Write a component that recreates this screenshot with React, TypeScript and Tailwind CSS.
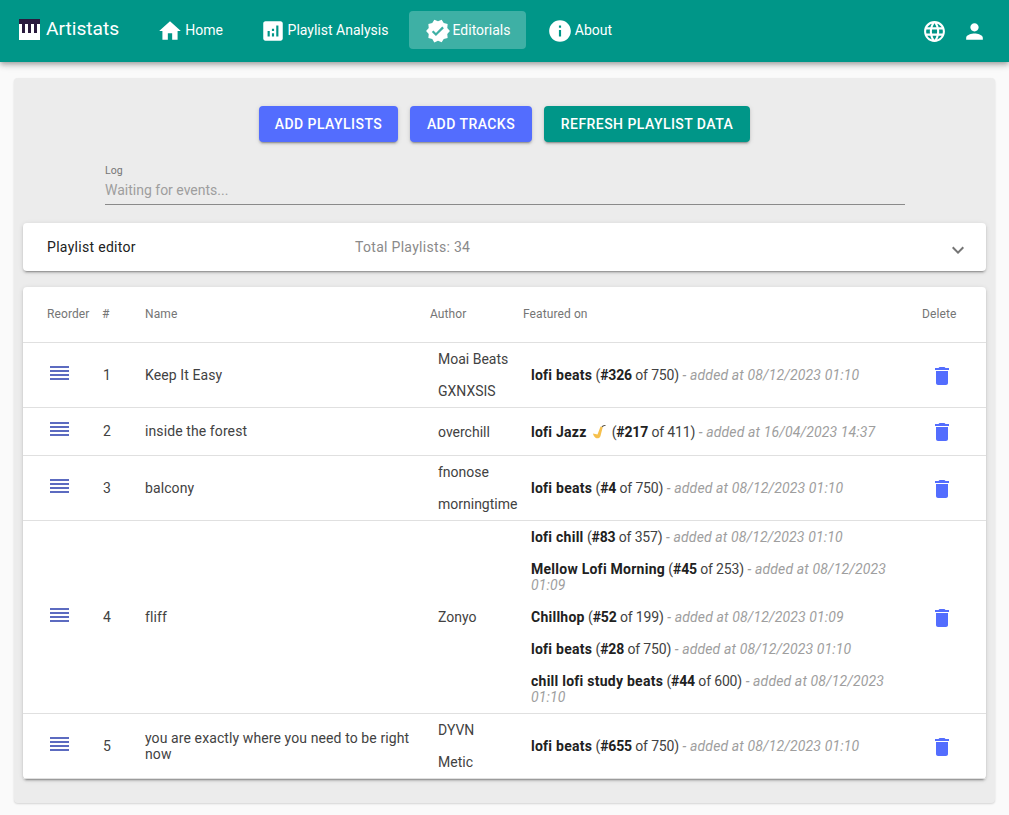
const font = "font-['Roboto','Helvetica','Arial',sans-serif]";

const icons = {
  home: 'M10 20v-6h4v6h5v-8h3L12 3 2 12h3v8z',
  chart:
    'M19 3H5c-1.1 0-2 .9-2 2v14c0 1.1.9 2 2 2h14c1.1 0 2-.9 2-2V5c0-1.1-.9-2-2-2zM9 17H7v-5h2v5zm4 0h-2v-3h2v3zm0-5h-2v-2h2v2zm4 5h-2V7h2v10z',
  verified:
    'M23 12l-2.44-2.79.34-3.69-3.61-.82-1.89-3.2L12 2.96 8.6 1.5 6.71 4.69 3.1 5.5l.34 3.7L1 12l2.44 2.79-.34 3.7 3.61.82L8.6 22.5l3.4-1.47 3.4 1.46 1.89-3.19 3.61-.82-.34-3.69L23 12zm-12.91 4.72l-3.8-3.81 1.48-1.48 2.32 2.33 5.85-5.87 1.48 1.48-7.33 7.35z',
  info: 'M12 2C6.48 2 2 6.48 2 12s4.48 10 10 10 10-4.48 10-10S17.52 2 12 2zm1 15h-2v-6h2v6zm0-8h-2V7h2v2z',
  language:
    'M11.99 2C6.47 2 2 6.48 2 12s4.47 10 9.99 10C17.52 22 22 17.52 22 12S17.52 2 11.99 2zm6.93 6h-2.95c-.32-1.25-.78-2.45-1.38-3.56 1.84.63 3.37 1.91 4.33 3.56zM12 4.04c.83 1.2 1.48 2.53 1.91 3.96h-3.82c.43-1.43 1.08-2.76 1.91-3.96zM4.26 14C4.1 13.36 4 12.69 4 12s.1-1.36.26-2h3.38c-.08.66-.14 1.32-.14 2 0 .68.06 1.34.14 2H4.26zm.82 2h2.95c.32 1.25.78 2.45 1.38 3.56-1.84-.63-3.37-1.9-4.33-3.56zm2.95-8H5.08c.96-1.66 2.49-2.93 4.33-3.56C8.81 5.55 8.35 6.75 8.03 8zM12 19.96c-.83-1.2-1.48-2.53-1.91-3.96h3.82c-.43 1.43-1.08 2.76-1.91 3.96zM14.34 14H9.66c-.09-.66-.16-1.32-.16-2 0-.68.07-1.35.16-2h4.68c.09.65.16 1.32.16 2 0 .68-.07 1.34-.16 2zm.25 5.56c.6-1.11 1.06-2.31 1.38-3.56h2.95c-.96 1.65-2.49 2.93-4.33 3.56zM16.36 14c.08-.66.14-1.32.14-2 0-.68-.06-1.34-.14-2h3.38c.16.64.26 1.31.26 2s-.1 1.36-.26 2h-3.38z',
  person: 'M12 12c2.21 0 4-1.79 4-4s-1.79-4-4-4-4 1.79-4 4 1.79 4 4 4zm0 2c-2.67 0-8 1.34-8 4v2h16v-2c0-2.66-5.33-4-8-4z',
  trash: 'M6 19c0 1.1.9 2 2 2h8c1.1 0 2-.9 2-2V7H6v12zM19 4h-3.5l-1-1h-5l-1 1H5v2h14V4z',
  chevron: 'M16.59 8.59L12 13.17 7.41 8.59 6 10l6 6 6-6z',
};

const Icon = ({ d, className }: { d: string; className: string }) => (
  <svg viewBox="0 0 24 24" fill="currentColor" className={className}>
    <path d={d} />
  </svg>
);

const PianoLogo = () => (
  <svg viewBox="0 0 21 21" className="w-[21px] h-[21px] shrink-0">
    <rect width="21" height="21" fill="#fff" />
    <rect width="21" height="5" fill="#2a1a3e" />
    <rect x="3" width="3" height="14" fill="#2a1a3e" />
    <rect x="9" width="3" height="14" fill="#2a1a3e" />
    <rect x="15" width="3" height="14" fill="#2a1a3e" />
  </svg>
);

const Saxophone = () => (
  <svg viewBox="0 0 16 16" className="inline-block w-4 h-4 mx-[1px] align-[-3px]">
    <path d="M2 9.500l4.500 1L9.500 2.500l2.200.8L9.500 12c-.6 2.200-3.300 3-5 1.700C3 12.600 2.300 11 2 9.500z" fill="#f6c04d" />
    <path d="M10.500 2.800C11 1.500 12.500 1 14.500 1v1c-1.500 0-2.300.4-2.800 1.300z" fill="#5f5a4e" />
  </svg>
);

const navItems = [
  { label: 'Home', icon: icons.home, width: 'w-[98px]' },
  { label: 'Playlist Analysis', icon: icons.chart, width: 'w-[158px]' },
  { label: 'Editorials', icon: icons.verified, width: 'w-[117px]', active: true },
  { label: 'About', icon: icons.info, width: 'w-[95px]' },
];

const NavBar = () => (
  <header className="h-[62px] bg-[#009688] text-white flex items-center pl-[19px] pr-[22px] shadow-[0_2px_4px_-1px_rgba(0,0,0,0.2),0_4px_5px_0_rgba(0,0,0,0.14),0_1px_10px_0_rgba(0,0,0,0.12)] relative">
    <div className="flex items-center gap-[6px] w-[122px] -mt-[4px]">
      <PianoLogo />
      <span className="text-[19.2px] leading-none">Artistats</span>
    </div>
    <nav className="flex items-center gap-[6px] -mt-[2px]">
      {navItems.map((item) => (
        <div
          key={item.label}
          className={`${item.width} h-[38px] flex items-center justify-center gap-[2px] rounded text-[14px] ${item.active ? 'bg-[#4db6ac]/80' : ''}`}
        >
          <Icon d={item.icon} className="w-[26px] h-[26px] shrink-0 mt-[1px]" />
          <span>{item.label}</span>
        </div>
      ))}
    </nav>
    <div className="ml-auto flex items-center gap-[15px]">
      <Icon d={icons.language} className="w-[25px] h-[25px]" />
      <Icon d={icons.person} className="w-[25px] h-[25px]" />
    </div>
  </header>
);

const raised = 'shadow-[0_3px_1px_-2px_rgba(0,0,0,0.2),0_2px_2px_0_rgba(0,0,0,0.14),0_1px_5px_0_rgba(0,0,0,0.12)]';

const Button = ({ label, className }: { label: string; className: string }) => (
  <div className={`h-[36px] flex items-center justify-center rounded text-white text-[14px] font-medium uppercase tracking-[0.45px] ${raised} ${className}`}>
    {label}
  </div>
);

type Feature = { name: React.ReactNode; pos: string; total: string; date: string };

const lofi = (pos: string): Feature => ({ name: 'lofi beats', pos, total: '750', date: '08/12/2023 01:10' });

const rows: {
  n: number;
  name: string;
  authors: string[];
  features: Feature[];
}[] = [
  { n: 1, name: 'Keep It Easy', authors: ['Moai Beats', 'GXNXSIS'], features: [lofi('326')] },
  {
    n: 2,
    name: 'inside the forest',
    authors: ['overchill'],
    features: [{ name: <>lofi Jazz <Saxophone /></>, pos: '217', total: '411', date: '16/04/2023 14:37' }],
  },
  { n: 3, name: 'balcony', authors: ['fnonose', 'morningtime'], features: [lofi('4')] },
  {
    n: 4,
    name: 'fliff',
    authors: ['Zonyo'],
    features: [
      { name: 'lofi chill', pos: '83', total: '357', date: '08/12/2023 01:10' },
      { name: 'Mellow Lofi Morning', pos: '45', total: '253', date: '08/12/2023 01:09' },
      { name: 'Chillhop', pos: '52', total: '199', date: '08/12/2023 01:09' },
      lofi('28'),
      { name: 'chill lofi study beats', pos: '44', total: '600', date: '08/12/2023 01:10' },
    ],
  },
  { n: 5, name: 'you are exactly where you need to be right now', authors: ['DYVN', 'Metic'], features: [lofi('655')] },
];

const columns = 'grid grid-cols-[79px_43px_285px_93px_399px_64px]';

const PlaylistTable = () => (
  <div className={`mt-[16px] bg-white rounded ${raised}`}>
    <div className={`${columns} h-[56px] items-center border-b border-[#e0e0e0] text-[12px] text-[#757575] tracking-[0.1px] pb-[2px]`}>
      <span className="pl-[24px]">Reorder</span>
      <span>#</span>
      <span>Name</span>
      <span>Author</span>
      <span>Featured on</span>
      <span>Delete</span>
    </div>
    {rows.map((row) => (
      <div
        key={row.n}
        className={`${columns} min-h-[48px] items-center text-[14px] text-[#424242] border-b border-[#e0e0e0]`}
      >
        <svg viewBox="0 0 19 14" className="w-[19px] h-[14px] ml-[27px] -mt-[5px] text-[#5c6bc0]" fill="currentColor">
          <rect y="0" width="19" height="2" />
          <rect y="4" width="19" height="2" />
          <rect y="8" width="19" height="2" />
          <rect y="12" width="19" height="2" />
        </svg>
        <span className="pl-[1px]">{row.n}</span>
        <span className="pr-[10px] leading-[16px] tracking-[0.1px] -mt-[1px]">{row.name}</span>
        <ul className="pl-[8px]">
          {row.authors.map((a) => (
            <li key={a} className="py-[8px] leading-[16px] whitespace-nowrap">
              {a}
            </li>
          ))}
        </ul>
        <ul className="pl-[8px] pr-[10px]">
          {row.features.map((f, j) => (
            <li key={j} className="py-[8px] leading-[16px] tracking-[-0.15px]">
              <b className="font-bold text-[#212121] tracking-[0.25px]">{f.name}</b> (<b className="font-bold text-[#212121]">#{f.pos}</b> of {f.total})
              <i className="text-[#9e9e9e] tracking-[0.13px]"> - added at {f.date}</i>
            </li>
          ))}
        </ul>
        <Icon d={icons.trash} className="w-6 h-6 ml-[8px] mt-[1px] text-[#536dfe]" />
      </div>
    ))}
  </div>
);

export default function App() {
  return (
    <div className={`${font} min-h-[815px] bg-[#fafafa]`}>
      <NavBar />
      <main className="mx-[14px] mt-[16px] bg-[#ececec] rounded px-[9px] pt-[28px] pb-[24px] shadow-[0_1px_2px_rgba(0,0,0,0.15)]">
        <div className="flex justify-center gap-[12px]">
          <Button label="Add Playlists" className="w-[139px] bg-[#536dfe]" />
          <Button label="Add Tracks" className="w-[122px] bg-[#536dfe]" />
          <Button label="Refresh Playlist Data" className="w-[206px] bg-[#009688]" />
        </div>
        <div className="ml-[82px] mr-[81px] mt-[22px] h-[41px] pt-[1px] border-b border-[#8a8a8a]">
          <div className="text-[10.5px] leading-[12px] text-[#757575]">Log</div>
          <div className="mt-[3px] text-[14px] leading-[20px] text-[#9e9e9e]">Waiting for events...</div>
        </div>
        <div className={`mt-[18px] h-[48px] bg-white rounded flex items-center pl-[24px] pr-[16px] text-[14px] tracking-[0.3px] ${raised}`}>
          <span className="w-[308px] text-[#212121]">Playlist editor</span>
          <span className="text-[#8a8a8a]">Total Playlists: 34</span>
          <Icon d={icons.chevron} className="w-6 h-6 ml-auto text-[#757575] mt-[5px]" />
        </div>
        <PlaylistTable />
      </main>
    </div>
  );
}
